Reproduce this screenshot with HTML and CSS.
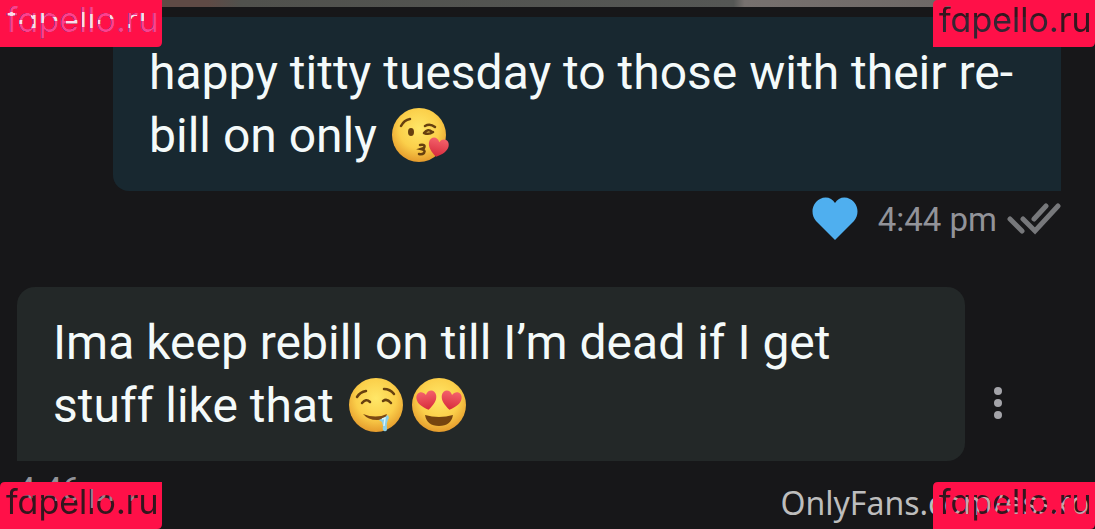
FILE: index.html
```
<!DOCTYPE html>
<html lang="en">
<head>
  <meta charset="UTF-8">
  <meta name="viewport" content="width=device-width, initial-scale=1.0">
  <title>Messages</title>
  <link rel="stylesheet" href="styles.css">
</head>
<body>
  <div class="photo"></div>

  <main class="chat">
    <div class="message sent">
      <p class="bubble">happy titty tuesday to those with their re-<br>bill on only
        <svg class="emoji" viewBox="0 0 56 56" role="img" aria-label="kissing face">
          <defs>
            <radialGradient id="face" cx="50%" cy="38%" r="62%">
              <stop offset="0" stop-color="#ffe768"/>
              <stop offset=".6" stop-color="#fbcf4a"/>
              <stop offset="1" stop-color="#e59b2c"/>
            </radialGradient>
            <linearGradient id="love" x1="0" y1="0" x2="0" y2="1">
              <stop offset="0" stop-color="#f4616b"/>
              <stop offset="1" stop-color="#d62a3b"/>
            </linearGradient>
            <path id="heart" d="M0 9C-6 5-10 1-10-4c0-6 7-8 10-2 3-6 10-4 10 2 0 5-4 9-10 13z"/>
          </defs>
          <circle cx="28" cy="28" r="27" fill="url(#face)"/>
          <g fill="none" stroke="#67400f" stroke-width="2.5" stroke-linecap="round">
            <path d="M10 19q3-6 9-7M34 19q5-3 10 1M33 26q5 2 9-1M33 26q4-5 8-1"/>
            <path d="M29 38q6-1 4 3l-3 1q5 1 3 4-2 2-5 1"/>
          </g>
          <ellipse cx="20" cy="25" rx="3" ry="4" fill="#67400f"/>
          <use href="#heart" transform="translate(47 41) rotate(12)" fill="url(#love)"/>
        </svg>
      </p>
      <div class="meta">
        <svg class="like" viewBox="0 0 46 44" role="img" aria-label="liked"><path d="M23 43 4 24C-2 17 0 6 8 2c6-3 12-1 15 4 3-5 9-7 15-4 8 4 10 15 4 22z" fill="#4fafef"/></svg>
        <time>4:44 pm</time>
        <svg class="ticks" viewBox="0 0 54 32" role="img" aria-label="read">
          <path d="M3 16l12 12M16 16l12 12L51 3M27 16 39 3" fill="none" stroke="#77787b" stroke-width="5" stroke-linecap="round"/>
        </svg>
      </div>
    </div>

    <div class="message received">
      <div class="row">
        <p class="bubble">Ima keep rebill on till I’m dead if I get<br>stuff like that
          <span class="pair"><svg class="emoji" viewBox="0 0 56 56" role="img" aria-label="drooling face">
            <circle cx="28" cy="28" r="27" fill="url(#face)"/>
            <g fill="none" stroke="#67400f" stroke-width="2.5" stroke-linecap="round">
              <path d="M9 20q3-5 9-6M36 12q6 0 10 5M14 26q4-5 8-1M35 24q4-3 8 2"/>
            </g>
            <path d="M15 37q13 5 24 0-1 6-10 6-9 0-14-6z" fill="#7b4813"/>
            <path d="M31 43q5-2 9-5l1 3q-3 4-2 11 0 3-3 2-2-1-1-5l-1-4z" fill="#8bd0e8"/>
            <path d="M34 42l3-1-1 8" fill="none" stroke="#d9f4fb" stroke-width="1.5"/>
          </svg><svg class="emoji" viewBox="0 0 56 56" role="img" aria-label="heart eyes">
            <circle cx="28" cy="28" r="27" fill="url(#face)"/>
            <path d="M14 38q14 4 28 0-2 11-14 11t-14-11z" fill="#76440f"/>
            <use href="#heart" transform="translate(16 24) rotate(-10)" fill="url(#love)"/>
            <use href="#heart" transform="translate(40 24) rotate(10)" fill="url(#love)"/>
          </svg></span>
        </p>
        <button class="more" aria-label="More options"><i></i><i></i><i></i></button>
      </div>
      <div class="meta"><time>4:46 pm</time></div>
    </div>
  </main>

  <div class="credit">OnlyFans.com/essxo</div>

  <!-- tags with the lettering punched out of the red -->
  <svg class="tag top left" viewBox="0 0 162 47">
    <defs>
      <mask id="punch">
        <rect width="162" height="47" fill="#fff"/>
        <text x="6" y="32" fill="#000">fapello.ru</text>
      </mask>
      <pattern id="specks" width="162" height="47" patternUnits="userSpaceOnUse">
        <rect width="162" height="47" fill="#ff3f8e"/>
        <path d="M8 14h7M19 22h6M31 17h5v9h-5M42 13v10M52 19h6M66 22h12M84 12v15M92 14v14M98 22h6M110 17h8M128 24v4M131 17h6M142 13v8" fill="none" stroke="#ffd9ea" stroke-width="4"/>
      </pattern>
    </defs>
    <path d="M0 0h162v42q0 5-5 5H0z" mask="url(#punch)"/>
    <text class="pink" x="6" y="32">fapello.ru</text>
  </svg>
  <svg class="tag top right" viewBox="0 0 162 47">
    <path d="M5 0h157v42q0 5-5 5H0V5q0-5 5-5z" mask="url(#punch)"/>
    <text x="6" y="32">fapello.ru</text>
  </svg>
  <svg class="tag bottom left" viewBox="0 0 162 47">
    <path d="M5 0h157v42q0 5-5 5H0V5q0-5 5-5z" mask="url(#punch)"/>
    <text x="6" y="32">fapello.ru</text>
  </svg>
  <svg class="tag bottom right" viewBox="0 0 162 47">
    <path d="M5 0h157v42q0 5-5 5H0V5q0-5 5-5z" mask="url(#punch)"/>
    <text x="6" y="32">fapello.ru</text>
  </svg>
</body>
</html>
```
FILE: styles.css
```
body {
  margin: 0;
  min-height: 100vh;
  position: relative;
  overflow: hidden;
  background: #171719;
  color: #f4fafa;
  font-family: Roboto, "Liberation Sans", sans-serif;
}
.photo {
  height: 7px;
  background: linear-gradient(to right, #5f4a45 19%, #50514d 22%, #555755 67%, #77716f 68%, #66615f);
}
.chat {
  padding: 10px 34px 0 17px;
}
.message {
  display: flex;
  flex-direction: column;
}
.sent {
  align-items: flex-end;
}
.bubble {
  box-sizing: border-box;
  width: 948px;
  max-width: 91%;
  margin: 0;
  padding: 24px 36px;
  font-size: 48px;
  line-height: 63px;
}
.sent .bubble {
  background: #182830;
  border-radius: 0 0 0 16px;
}
.received .bubble {
  background: #232828;
  border-radius: 18px 18px 18px 0;
}
.emoji {
  width: 56px;
  height: 56px;
  margin-left: 2px;
  overflow: visible;
  vertical-align: -11px;
}
.pair {
  display: inline-flex;
  gap: 5px;
  vertical-align: -11px;
}
.meta {
  display: flex;
  align-items: center;
  height: 56px;
  color: #929399;
  font-size: 33px;
}
.like {
  width: 46px;
  height: 44px;
  margin-right: 20px;
}
.ticks {
  width: 54px;
  height: 32px;
  margin-left: 10px;
}
.received {
  margin-top: 40px;
}
.row {
  display: flex;
  align-items: center;
}
.more {
  display: flex;
  flex-direction: column;
  gap: 4px;
  margin: 58px 0 0 29px;
  padding: 0;
  border: none;
  background: none;
}
.more i {
  width: 8px;
  height: 8px;
  border-radius: 50%;
  background: #a4a4a9;
}
.credit {
  position: absolute;
  right: 6px;
  bottom: 4px;
  color: #bdbdbd;
  font: 32px/44px "Noto Sans", sans-serif;
}
.tag {
  position: absolute;
  width: 162px;
  height: 47px;
  fill: #ff1048;
  font: 400 34px Inter, sans-serif;
  font-feature-settings: "cv11";
}
.tag > text {
  fill: rgba(255, 16, 72, 0.15);
}
.tag > .pink {
  fill: url(#specks);
}
.top {
  top: 0;
}
.bottom {
  bottom: 0;
}
.left {
  left: 0;
}
.right {
  right: 0;
}
```
